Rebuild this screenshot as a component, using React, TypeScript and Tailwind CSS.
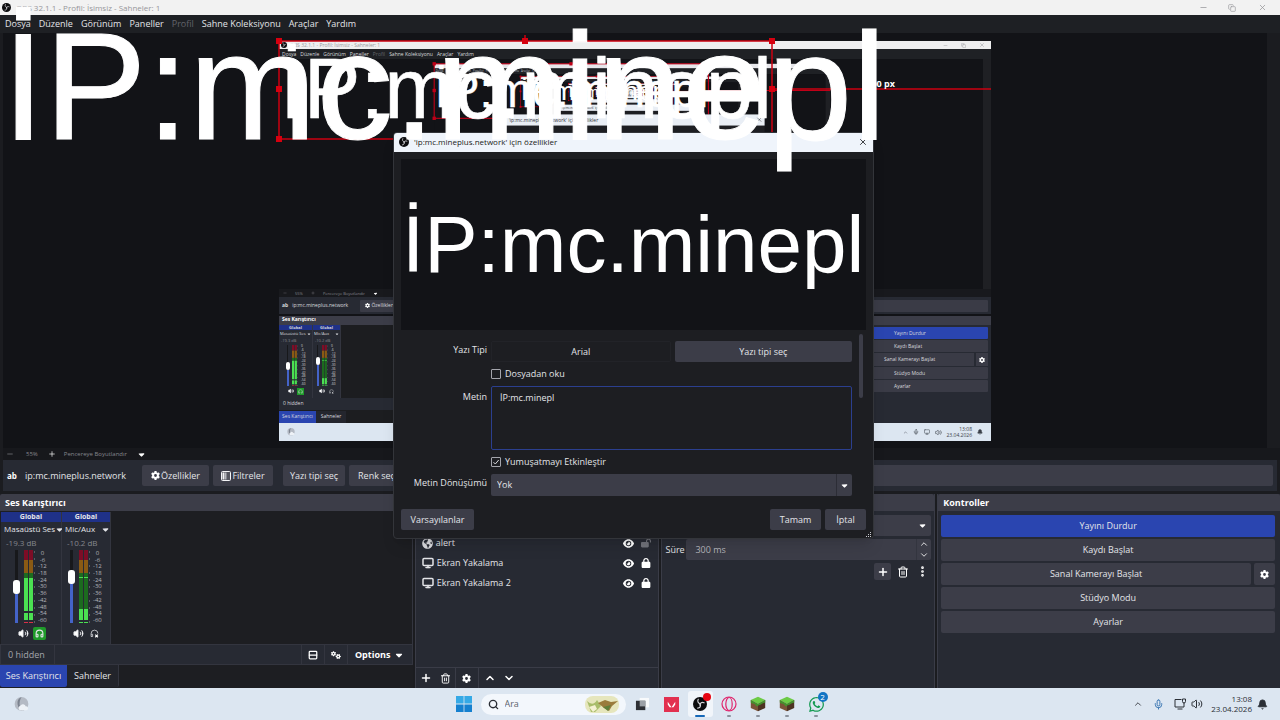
import { useState } from "react"
import type { ReactNode } from "react"
import clsx from "clsx"
import {
  FaCaretDown,
  FaEye,
  FaGear,
  FaGears,
  FaLock,
  FaLockOpen,
  FaWhatsapp,
} from "react-icons/fa6"
import { FaGlobeAmericas } from "react-icons/fa"
import {
  Bell,
  ChevronDown,
  ChevronUp,
  Copy,
  EllipsisVertical,
  Headphones,
  Mic,
  Minus,
  Monitor,
  Plus,
  Rows2,
  Search,
  Trash2,
  Volume2,
  X,
} from "lucide-react"

const OVERLAY_TEXT = "İP:mc.minepl"
const SOURCE_NAME = "ip:mc.mineplus.network"
const DIALOG_TITLE = `'${SOURCE_NAME}' için özellikler`
const MENUS = ["Dosya", "Düzenle", "Görünüm", "Paneller", "Profil", "Sahne Koleksiyonu", "Araçlar", "Yardım"]
const DB_SCALE = ["0", "-6", "-12", "-18", "-24", "-30", "-36", "-42", "-48", "-54", "-60"]

// the screen is captured into its own preview at this ratio
const RATIO = 712 / 1280
const MAX_ECHO = 7

interface Band {
  from: number
  to: number
  color: string
}

interface Channel {
  name: string
  db: string
  level: number
  monitoring: boolean
  bands: Band[]
}

const CHANNELS: Channel[] = [
  {
    name: "Masaüstü Ses",
    db: "-19.3 dB",
    level: 50,
    monitoring: true,
    bands: [
      { from: 0, to: 10, color: "#7d0d26" },
      { from: 10, to: 23, color: "#8a5a14" },
      { from: 23, to: 28, color: "#1c6b1f" },
      { from: 28, to: 61, color: "#4be052" },
      { from: 63, to: 70, color: "#4be052" },
      { from: 72, to: 73, color: "#d83048" },
    ],
  },
  {
    name: "Mic/Aux",
    db: "-10.2 dB",
    level: 66,
    monitoring: false,
    bands: [
      { from: 0, to: 10, color: "#7d0d26" },
      { from: 10, to: 23, color: "#8a5a14" },
      { from: 23, to: 59, color: "#1c6b1f" },
      { from: 27, to: 28, color: "#4be052" },
      { from: 59, to: 70, color: "#4be052" },
      { from: 72, to: 73, color: "#4be052" },
    ],
  },
]

function ObsLogo({ className }: { className?: string }) {
  return (
    <svg viewBox="0 0 24 24" className={className} aria-hidden="true">
      <circle cx="12" cy="12" r="12" fill="#0c0c0e" />
      <g fill="none" stroke="#d6d6da" strokeWidth="2" strokeLinecap="round">
        <path d="M9 4c-2 4 0 7 4 8" />
        <path d="M19 10c-4-2-7 0-7 4" />
        <path d="M8 19c4 0 6-3 4-7" />
      </g>
    </svg>
  )
}

function FilterIcon() {
  return (
    <svg viewBox="0 0 20 20" className="size-[10px]" aria-hidden="true">
      <rect x="1" y="1" width="18" height="18" rx="2" fill="#55565f" stroke="#f4f4f6" strokeWidth="2" />
      <path d="M3 3h4v14H3z" fill="#f4f4f6" />
      <path d="M8 3h3v14H8z" fill="#b5b6bd" />
    </svg>
  )
}

function MutedHeadphones({ className }: { className?: string }) {
  return (
    <svg viewBox="0 0 24 24" className={className} fill="none" stroke="currentColor" strokeWidth="2" aria-hidden="true">
      <path d="M4 20h-1v-8a9 9 0 0 1 18 0" />
      <path d="M3 14h4v6H3" />
      <path d="M14 15l7 7M21 15l-7 7" stroke="#fff" strokeWidth="3" />
    </svg>
  )
}

function Meter({ bands, className }: { bands: Band[]; className: string }) {
  return (
    <svg viewBox="0 0 11 73" preserveAspectRatio="none" className={className} aria-hidden="true">
      {bands.map((b, i) => (
        <g key={i} fill={b.color}>
          <rect x="0" y={b.from} width="4" height={b.to - b.from} />
          <rect x="5" y={b.from} width="4" height={b.to - b.from} />
        </g>
      ))}
      {DB_SCALE.map((_, i) => (
        <path key={i} d={`M10 ${2 + i * 7}h1`} stroke="#8b8c94" />
      ))}
    </svg>
  )
}

// Draws the feedback loop: every level holds a smaller copy of the screen
function Echo({ level, x, y }: { level: number; x: number; y: number }) {
  if (level > MAX_ECHO) return null
  const s = Math.pow(RATIO, level)
  const px = (v: number) => x + v * s
  const py = (v: number) => y + v * s

  return (
    <g>
      {level > 1 && (
        <>
          <rect x={x} y={y} width={1280 * s} height={720 * s} fill="#121317" />
          <rect x={x} y={y} width={1280 * s} height={15 * s} fill="#e6e6ea" />
          <rect x={x} y={py(15)} width={1280 * s} height={18 * s} fill="#1f2125" />
          <rect x={px(1265)} y={py(33)} width={15 * s} height={420 * s} fill="#1f2024" />
        </>
      )}
      {level === 2 && (
        <text x={px(5)} y={py(27)} fontSize={9 * s} fill="#b9bac0" xmlSpace="preserve">
          {MENUS.join("   ")}
        </text>
      )}
      <Echo level={level + 1} x={px(279)} y={py(41)} />
      <rect x={px(279)} y={py(41)} width={493 * s} height={98 * s} fill="none" stroke="#c00018" strokeWidth={2 * s} />
      {[279, 525, 772].map((hx) => (
        <rect key={hx} x={px(hx - 3)} y={py(38)} width={6 * s} height={6 * s} fill="#c00018" />
      ))}
      <rect x={px(276)} y={py(86)} width={6 * s} height={6 * s} fill="#c00018" />
      <rect x={px(276)} y={py(136)} width={6 * s} height={6 * s} fill="#c00018" />
      <path d={`M${px(772)} ${py(89)}H${px(991)}`} stroke="#c00018" strokeWidth={2 * s} />
      <rect x={px(393)} y={py(132)} width={480 * s} height={407 * s} fill="#1d1e22" />
      <rect x={px(393)} y={py(132)} width={480 * s} height={20 * s} fill="#e9eef5" />
      {level < 3 && (
        <>
          <text x={px(413)} y={py(146)} fontSize={9 * s} fill="#33343a">
            {DIALOG_TITLE}
          </text>
          <path
            d={`M${px(860)} ${py(138)}L${px(867)} ${py(145)}M${px(867)} ${py(138)}L${px(860)} ${py(145)}`}
            stroke="#33343a"
            strokeWidth={s}
          />
        </>
      )}
      <text
        x={px(2)}
        y={py(139)}
        fontSize={153 * s}
        fill="#fff"
        stroke="#fff"
        strokeWidth={s}
        fontFamily="Liberation Sans, Arial, sans-serif"
      >
        {OVERLAY_TEXT}
      </text>
    </g>
  )
}

function Guides() {
  const handles = [
    [0, 0],
    [246, 0],
    [493, 0],
    [0, 48],
    [493, 48],
    [0, 98],
    [246, 98],
    [493, 98],
  ]
  return (
    <g>
      <rect x="0" y="0" width="493" height="98" fill="none" stroke="#cc0011" strokeWidth="1.5" />
      <path d="M246 0v-6M493 48h219" stroke="#cc0011" strokeWidth="1.5" />
      {handles.map(([hx, hy]) => (
        <rect key={`${hx}-${hy}`} x={hx - 3} y={hy - 3} width="6" height="6" fill="#d6000f" />
      ))}
      <text x="616" y="46" textAnchor="end" fontSize="9" fontWeight="700" fill="#fff">
        00 px
      </text>
    </g>
  )
}

function MiniButton({ children, active }: { children: ReactNode; active?: boolean }) {
  return (
    <div
      className={clsx(
        "flex h-[12px] w-full items-center rounded-[1px] pl-[92px]",
        active ? "bg-[#2a45b0]" : "bg-[#3a3b46]"
      )}
    >
      {children}
    </div>
  )
}

function ScreenCapture() {
  return (
    <div className="relative flex h-[400px] w-[712px] flex-col bg-[#121317] text-[5px] leading-[7px] text-[#d9dade]">
      <div className="flex h-[8px] items-center gap-[3px] bg-[#eeeeef] px-[2px] text-[#9a9a9e]">
        <ObsLogo className="size-[6px]" />
        <span className="grow">OBS 32.1.1 - Profil: İsimsiz - Sahneler: 1</span>
        <Minus className="mr-[10px] size-[5px]" />
        <Copy className="mr-[10px] size-[5px]" />
        <X className="mr-[4px] size-[6px]" />
      </div>
      <div className="flex h-[10px] items-center gap-[4px] bg-[#1f2125] px-[3px]">
        {MENUS.map((m) => (
          <span key={m} className={m === "Profil" ? "text-[#63646b]" : undefined}>
            {m}
          </span>
        ))}
      </div>
      <div className="grow border-r-8 border-[#1f2024]" />
      <div className="flex h-[8px] items-center gap-[8px] bg-[#18191d] px-[4px] text-[4px] text-[#85868c]">
        <Minus className="size-[4px]" />
        <span>55%</span>
        <Plus className="size-[4px]" />
        <span>Pencereye Boyutlandır</span>
        <FaCaretDown className="size-[5px] text-white" />
      </div>
      <div className="flex h-[17px] items-center gap-[4px] bg-[#272a33] px-[3px]">
        <span className="font-bold">ab</span>
        <span className="w-[64px]">{SOURCE_NAME}</span>
        <div className="flex h-[12px] w-[38px] items-center justify-center gap-[1px] rounded-[1px] bg-[#3a3b46]">
          <FaGear className="size-[5px] text-white" />
          Özellikler
        </div>
        <div className="h-[12px] grow rounded-[1px] bg-[#3a3b46]" />
      </div>
      <div className="flex h-[109px] gap-px pt-[2px]">
        <div className="flex w-[229px] flex-col">
          <div className="h-[9px] bg-[#3c3d48] px-[3px] font-bold text-white">Ses Karıştırıcı</div>
          <div className="flex grow bg-[#1c1d20]">
            {CHANNELS.map((c) => (
              <div
                key={c.name}
                className={clsx(
                  "flex flex-col border-r border-[#33353f] bg-[#272a33] text-[4px] leading-[6px]",
                  c.monitoring ? "w-[34px]" : "w-[28px]"
                )}
              >
                <div className="h-[5px] bg-[#1f3188] text-center font-bold">Global</div>
                <div className="flex h-[8px] items-center justify-between px-px whitespace-nowrap">
                  <span>{c.name}</span>
                  <FaCaretDown className="size-[4px] shrink-0" />
                </div>
                <div className="h-[7px] px-[2px] text-[#85868c]">{c.db}</div>
                <div className={clsx("flex gap-[3px]", c.monitoring ? "pl-[7px]" : "pl-[3px]")}>
                  <div className="flex h-[41px] w-[3px] flex-col items-center">
                    <span className={clsx("w-px bg-[#17181b]", c.monitoring ? "h-[17px]" : "h-[12px]")} />
                    <span className="h-[8px] w-[4px] shrink-0 rounded-full bg-white" />
                    <span className="w-[2px] grow bg-[#4463c8]" />
                  </div>
                  <Meter bands={c.bands} className="h-[41px] w-[6px]" />
                  <div className="flex h-[41px] flex-col justify-between text-[3px] leading-[3px]">
                    {DB_SCALE.map((d) => (
                      <span key={d}>{d}</span>
                    ))}
                  </div>
                </div>
                <div className="flex h-[10px] items-center justify-center gap-[3px]">
                  <Volume2 className="size-[6px] fill-white" />
                  <span className={clsx("p-px", c.monitoring && "bg-[#1f9a2a]")}>
                    {c.monitoring ? <Headphones className="size-[5px]" /> : <MutedHeadphones className="size-[5px]" />}
                  </span>
                </div>
              </div>
            ))}
          </div>
          <div className="h-[12px] bg-[#272a33] px-[4px] pt-[2px]">0 hidden</div>
          <div className="flex h-[13px] items-center bg-[#1c1d20]">
            <span className="h-[12px] w-[37px] bg-[#2a45b0] pt-[2px] text-center">Ses Karıştırıcı</span>
            <span className="h-[12px] w-[30px] bg-[#24262e] pt-[2px] text-center">Sahneler</span>
          </div>
        </div>
        <div className="grow bg-[#272a33]" />
        <div className="flex w-[191px] flex-col gap-[2px] bg-[#272a33]">
          <div className="h-[9px] bg-[#3c3d48]" />
          <div className="flex flex-col gap-px pr-[3px] pl-[2px]">
            <MiniButton active>Yayını Durdur</MiniButton>
            <MiniButton>Kaydı Başlat</MiniButton>
            <div className="flex gap-[2px]">
              <div className="flex h-[13px] flex-1 items-center bg-[#3a3b46] pl-[82px]">Sanal Kamerayı Başlat</div>
              <div className="flex h-[13px] w-[12px] items-center justify-center bg-[#3a3b46]">
                <FaGear className="size-[6px] text-white" />
              </div>
            </div>
            <MiniButton>Stüdyo Modu</MiniButton>
            <MiniButton>Ayarlar</MiniButton>
          </div>
        </div>
      </div>
      <div className="flex h-[18px] items-center justify-between bg-[#dce6f1] px-[8px] text-[#3b4048]">
        <WeatherIcon className="size-[8px]" />
        <div className="flex items-center gap-[5px]">
          <ChevronUp className="size-[5px]" />
          <Mic className="size-[6px]" />
          <Monitor className="size-[6px]" />
          <Volume2 className="size-[7px]" />
          <div className="flex flex-col text-right leading-[6px]">
            <span>13:08</span>
            <span>23.04.2026</span>
          </div>
          <Bell className="size-[6px] fill-current" />
        </div>
      </div>
      <svg
        viewBox="0 0 712 400"
        className="absolute inset-0 size-full overflow-visible"
        role="img"
        aria-label="Ekran Yakalama"
      >
        <Echo level={1} x={0} y={0} />
        <Guides />
      </svg>
    </div>
  )
}

function WeatherIcon({ className }: { className?: string }) {
  return (
    <svg viewBox="0 0 24 24" className={className} aria-hidden="true">
      <circle cx="12" cy="11" r="11" fill="#b4bac4" />
      <path d="M12 0a11 11 0 0 0 4 21c-8-3-9-12-4-21z" fill="#7c838f" />
      <path d="M9 21a4 4 0 0 1 1-7 5 5 0 0 1 9 1 3 3 0 0 1 1 6z" fill="#eef2f7" />
    </svg>
  )
}

function ToolButton({ children, className }: { children: ReactNode; className?: string }) {
  return (
    <button
      className={clsx(
        "flex h-[21px] shrink-0 items-center justify-center gap-px rounded-[2px] bg-[#3c3d48] whitespace-nowrap hover:bg-[#4a4b57]",
        className
      )}
    >
      {children}
    </button>
  )
}

function DockHeader({ children }: { children?: ReactNode }) {
  return (
    <h2 className="flex h-[17px] shrink-0 items-center rounded-t-[2px] bg-[#3c3d48] px-[5px] font-bold text-white">
      {children}
    </h2>
  )
}

function ChannelStrip({ channel }: { channel: Channel }) {
  const [level, setLevel] = useState(channel.level)
  return (
    <div
      className={clsx(
        "flex flex-col border-r border-[#33353f] bg-[#272a33]",
        channel.monitoring ? "w-[61px]" : "w-[49px]"
      )}
    >
      <div className="h-[10px] bg-[#1f3188] text-center text-[7px] leading-[10px] font-bold">Global</div>
      <button className="flex h-[14px] items-center justify-between pl-[3px] text-[8px] whitespace-nowrap">
        {channel.name}
        <FaCaretDown className="size-[9px] shrink-0" />
      </button>
      <div className="h-[14px] px-[5px] text-[8px] leading-[14px] text-[#85868c]">{channel.db}</div>
      <div className={clsx("flex gap-[3px]", channel.monitoring ? "pl-[11px]" : "pl-[5px]")}>
        <div className="relative flex h-[73px] w-[9px] flex-col items-center">
          <span className="w-[3px] bg-[#17181b]" style={{ height: `${Math.round((100 - level) * 0.6)}px` }} />
          <span className="h-[14px] w-[7px] shrink-0 rounded-[3px] bg-white" />
          <span className="w-[3px] grow bg-[#4463c8]" />
          <input
            type="range"
            aria-label={channel.name}
            value={level}
            onChange={(e) => setLevel(Number(e.target.value))}
            className="absolute inset-0 size-full opacity-0 [writing-mode:vertical-lr]"
          />
        </div>
        <Meter bands={channel.bands} className="h-[73px] w-[11px]" />
        <div className="flex h-[73px] flex-col justify-between text-center text-[6px] leading-[6px] text-[#b4b5bb]">
          {DB_SCALE.map((d) => (
            <span key={d}>{d}</span>
          ))}
        </div>
      </div>
      <div className={clsx("flex h-[20px] items-center gap-[4px]", channel.monitoring ? "pl-[17px]" : "pl-[11px]")}>
        <button aria-label="Sesi kapat">
          <Volume2 className="size-[11px] fill-white" />
        </button>
        <button aria-label="İzleme" className={clsx("rounded-[2px] p-[2px]", channel.monitoring && "bg-[#1f9a2a]")}>
          {channel.monitoring ? (
            <Headphones className="size-[9px]" strokeWidth={3} />
          ) : (
            <MutedHeadphones className="size-[9px]" />
          )}
        </button>
      </div>
    </div>
  )
}

function MixerDock() {
  return (
    <section className="flex flex-col">
      <DockHeader>Ses Karıştırıcı</DockHeader>
      <div className="flex grow border-r border-[#33353f] bg-[#1d1e22] pt-px pl-px">
        {CHANNELS.map((c) => (
          <ChannelStrip key={c.name} channel={c} />
        ))}
      </div>
      <div className="flex h-[21px] items-stretch border border-[#33353f] bg-[#272a33] text-[#a4a5ac]">
        <button className="w-[54px] border-r border-[#33353f] px-[7px] text-left whitespace-nowrap">0 hidden</button>
        <div className="grow border-r border-[#33353f]" />
        <button aria-label="Düzen" className="flex w-[23px] items-center justify-center border-r border-[#33353f] text-white">
          <Rows2 className="size-[10px]" strokeWidth={3} />
        </button>
        <button aria-label="Gelişmiş" className="flex w-[23px] items-center justify-center border-r border-[#33353f] text-white">
          <FaGears className="size-[10px]" />
        </button>
        <button className="flex w-[64px] items-center justify-center gap-[4px] font-bold text-white">
          Options
          <FaCaretDown className="size-[10px]" />
        </button>
      </div>
      <div className="flex h-[23px] bg-[#1d1e22]">
        <button className="h-[22px] w-[67px] rounded-b-[2px] bg-[#2a45b0]">Ses Karıştırıcı</button>
        <button className="h-[22px] w-[52px] rounded-b-[2px] border-r border-[#33353f] bg-[#22242b]">Sahneler</button>
      </div>
    </section>
  )
}

function SourcesDock() {
  const sources = [
    { name: "alert", browser: true, locked: false },
    { name: "Ekran Yakalama", browser: false, locked: true },
    { name: "Ekran Yakalama 2", browser: false, locked: true },
  ]
  return (
    <section className="flex flex-col border-r border-[#3a3c47] bg-[#272a33]">
      <DockHeader />
      <ul className="grow border-l border-[#3a3c47] pt-[22px]">
        {sources.map((s) => (
          <li key={s.name} className="flex h-[20px] items-center pr-[7px] pl-[6px]">
            {s.browser ? (
              <FaGlobeAmericas className="size-[11px] text-[#d9dade]" />
            ) : (
              <Monitor className="size-[12px]" strokeWidth={3} />
            )}
            <span className="grow pl-[3px]">{s.name}</span>
            <button aria-label="Görünürlük" className="mr-[7px]">
              <FaEye className="size-[11px] text-white" />
            </button>
            <button aria-label="Kilit">
              {s.locked ? <FaLock className="size-[10px] text-white" /> : <FaLockOpen className="size-[10px] text-[#70727a]" />}
            </button>
          </li>
        ))}
      </ul>
      <div className="flex h-[21px] items-stretch border-t border-l border-[#3a3c47] text-white">
        <button aria-label="Ekle" className="flex w-[20px] items-center justify-center">
          <Plus className="size-[12px]" strokeWidth={3} />
        </button>
        <button aria-label="Sil" className="flex w-[20px] items-center justify-center border-r border-[#3a3c47]">
          <Trash2 className="size-[11px]" strokeWidth={2} />
        </button>
        <button aria-label="Özellikler" className="flex w-[23px] items-center justify-center border-r border-[#3a3c47]">
          <FaGear className="size-[9px]" />
        </button>
        <button aria-label="Yukarı" className="flex w-[23px] items-center justify-center">
          <ChevronUp className="size-[12px]" strokeWidth={3} />
        </button>
        <button aria-label="Aşağı" className="flex w-[14px] items-center justify-center">
          <ChevronDown className="size-[12px]" strokeWidth={3} />
        </button>
      </div>
    </section>
  )
}

function TransitionsDock() {
  return (
    <section className="flex flex-col border-r border-l border-[#3a3c47] bg-[#272a33]">
      <DockHeader />
      <div className="flex flex-col gap-[3px] px-[3px] pt-[4px]">
        <button
          aria-label="Geçiş"
          className="flex h-[21px] items-center justify-end rounded-[2px] bg-[#3c3d48] pr-[4px] text-white"
        >
          <FaCaretDown className="size-[9px]" />
        </button>
        <div className="flex h-[21px] items-center gap-[3px]">
          <label htmlFor="duration" className="w-[18px]">
            Süre
          </label>
          <div className="flex h-full min-w-0 grow rounded-[2px] bg-[#3c3d48]">
            <input
              id="duration"
              defaultValue="300 ms"
              className="min-w-0 grow bg-transparent px-[9px] text-[#b4b5bb] outline-none"
            />
            <div className="flex w-[15px] flex-col items-center justify-between border-l border-[#33353f]">
              <ChevronUp className="size-[10px] text-white" />
              <ChevronDown className="size-[10px] text-white" />
            </div>
          </div>
        </div>
        <div className="flex justify-end gap-[3px] text-white">
          <button aria-label="Geçiş ekle" className="flex size-[17px] items-center justify-center rounded-[2px] bg-[#3c3d48]">
            <Plus className="size-[12px]" strokeWidth={3} />
          </button>
          <button aria-label="Geçişi sil" className="flex size-[17px] items-center justify-center">
            <Trash2 className="size-[12px]" />
          </button>
          <button aria-label="Diğer" className="flex size-[17px] items-center justify-center">
            <EllipsisVertical className="size-[13px]" strokeWidth={3} />
          </button>
        </div>
      </div>
    </section>
  )
}

function ControlButton({ children, active }: { children: ReactNode; active?: boolean }) {
  return (
    <button className={clsx("h-[22px] grow rounded-[2px]", active ? "bg-[#2a45b0]" : "bg-[#3c3d48]")}>{children}</button>
  )
}

function ControlsDock() {
  return (
    <section className="flex flex-col border-l border-[#3a3c47] bg-[#272a33]">
      <DockHeader>Kontroller</DockHeader>
      <div className="flex flex-col gap-[2px] py-[4px] pr-[5px] pl-[3px]">
        <ControlButton active>Yayını Durdur</ControlButton>
        <ControlButton>Kaydı Başlat</ControlButton>
        <div className="flex gap-[3px]">
          <ControlButton>Sanal Kamerayı Başlat</ControlButton>
          <button aria-label="Sanal kamera ayarları" className="flex w-[21px] items-center justify-center rounded-[2px] bg-[#3c3d48]">
            <FaGear className="size-[9px] text-white" />
          </button>
        </div>
        <ControlButton>Stüdyo Modu</ControlButton>
        <ControlButton>Ayarlar</ControlButton>
      </div>
    </section>
  )
}

function CheckField({ id, label, checked }: { id: string; label: string; checked?: boolean }) {
  return (
    <div className="col-start-2 flex items-center gap-[4px]">
      <span className="relative flex size-[10px]">
        <input
          id={id}
          type="checkbox"
          defaultChecked={checked}
          className="peer size-[10px] appearance-none rounded-[1px] border border-[#a4a5ac]"
        />
        <svg
          viewBox="0 0 10 10"
          className="pointer-events-none absolute inset-0 hidden size-full peer-checked:block"
          fill="none"
          stroke="#d9dade"
        >
          <path d="M2.5 5.2l1.8 1.8 3.400-4" />
        </svg>
      </span>
      <label htmlFor={id}>{label}</label>
    </div>
  )
}

function PropertiesDialog() {
  return (
    <div
      role="dialog"
      aria-label={DIALOG_TITLE}
      className="absolute top-[132px] left-[393px] flex w-[481px] flex-col rounded-[4px] border border-[#33353a] bg-[#1d1e22] shadow-lg"
    >
      <div className="flex h-[19px] items-center gap-[5px] rounded-t-[3px] bg-[#eff4fb] px-[5px] pb-[2px] text-[8px] text-[#1b1c20]">
        <ObsLogo className="size-[10px]" />
        <span className="grow">{DIALOG_TITLE}</span>
        <button aria-label="Kapat">
          <X className="size-[10px]" />
        </button>
      </div>
      <div className="mx-[7px] mt-[7px] flex h-[171px] items-center bg-[#121317] px-px">
        <span className="font-['Liberation_Sans',Arial,sans-serif] text-[80px] leading-[80px] whitespace-nowrap text-white">
          {OVERLAY_TEXT}
        </span>
      </div>
      <div className="flex gap-[7px] pt-[4px] pr-[10px] pl-[7px]">
        <div className="grid grow grid-cols-[86px_1fr] gap-x-[4px] gap-y-[6px] pt-[7px]">
          <span className="pt-[3px] text-right">Yazı Tipi</span>
          <div className="flex h-[21px] gap-[4px]">
            <span className="flex flex-1 items-center justify-center rounded-[2px] border border-[#222328]">Arial</span>
            <ToolButton className="flex-1">Yazı tipi seç</ToolButton>
          </div>
          <CheckField id="from-file" label="Dosyadan oku" />
          <label htmlFor="text" className="col-start-1 pt-[5px] text-right">
            Metin
          </label>
          <textarea
            id="text"
            defaultValue={OVERLAY_TEXT}
            className="h-[64px] resize-none rounded-[2px] border border-[#2b3f8f] bg-transparent px-[8px] py-[5px] outline-none"
          />
          <CheckField id="antialias" label="Yumuşatmayı Etkinleştir" checked />
          <label htmlFor="transform" className="col-start-1 pt-[3px] text-right">
            Metin Dönüşümü
          </label>
          <div className="relative">
            <select id="transform" className="h-[22px] w-full appearance-none rounded-[2px] bg-[#3c3d48] px-[6px]">
              <option>Yok</option>
            </select>
            <span className="pointer-events-none absolute inset-y-0 right-0 flex w-[16px] items-center justify-center border-l border-[#2c2d36]">
              <FaCaretDown className="size-[9px] text-white" />
            </span>
          </div>
        </div>
        <div className="h-[64px] w-[4px] rounded-full bg-[#3c3d48]" />
      </div>
      <div className="flex gap-[4px] px-[7px] pt-[13px] pb-[8px]">
        <ToolButton className="w-[73px]">Varsayılanlar</ToolButton>
        <div className="grow" />
        <ToolButton className="w-[51px]">Tamam</ToolButton>
        <ToolButton className="w-[41px]">İptal</ToolButton>
      </div>
      <svg viewBox="0 0 6 6" className="absolute right-[1px] bottom-[1px] size-[6px]" fill="#c9cad0" aria-hidden="true">
        <path d="M0 5h1v1H0zM2 5h1v1H2zM4 5h1v1H4zM2 3h1v1H2zM4 3h1v1H4zM4 1h1v1H4z" />
      </svg>
    </div>
  )
}

function GrassBlock() {
  return (
    <svg viewBox="0 0 20 20" className="size-[16px]" aria-hidden="true">
      <path d="M10 1l9 4-9 5-9-5z" fill="#6ccb45" />
      <path d="M1 5l9 5v9l-9-4z" fill="#7a5337" />
      <path d="M19 5l-9 5v9l9-4z" fill="#4d3222" />
      <path d="M1 5l9 5v3l-3-1v-1l-3-2v1L1 8zM19 5l-9 5v2l3-1 3-2 3-1z" fill="#43912c" />
    </svg>
  )
}

function TaskItem({ label, children, active, running }: { label: string; children: ReactNode; active?: boolean; running?: boolean }) {
  return (
    <button
      aria-label={label}
      className={clsx("relative flex h-[26px] w-[25px] items-center justify-center rounded-[3px]", active && "bg-[#f1f5fa]")}
    >
      {children}
      {running && (
        <span
          className={clsx(
            "absolute bottom-0 h-[2px] rounded-full",
            active ? "w-[10px] bg-[#1668b8]" : "w-[4px] bg-[#8a919c]"
          )}
        />
      )}
    </button>
  )
}

function Taskbar() {
  return (
    <footer className="flex h-[32px] shrink-0 items-center bg-[#dce6f1] text-[#2a2e35]">
      <div className="flex flex-1 items-center pl-[14px]">
        <WeatherIcon className="size-[15px]" />
      </div>
      <div className="mr-[2px] flex items-center gap-[4px]">
        <TaskItem label="Başlat">
          <svg viewBox="0 0 16 16" className="size-[16px]" aria-hidden="true">
            <path d="M0 0h7.600v7.600H0zM8.400 0H16v7.600H8.400z" fill="#35a9e6" />
            <path d="M0 8.400h7.600V16H0zM8.400 8.400H16V16H8.400z" fill="#1580cf" />
          </svg>
        </TaskItem>
        <div className="flex h-[21px] w-[145px] items-center rounded-full bg-[#f3f7fc] px-[7px]">
          <Search className="size-[11px]" strokeWidth={3} />
          <input aria-label="Ara" placeholder="Ara" className="w-[60px] grow bg-transparent px-[6px] outline-none placeholder:text-[#5d636d]" />
          <svg viewBox="0 0 34 17" className="h-[17px] w-[34px]" aria-hidden="true">
            <rect width="34" height="17" rx="8" fill="#e6e6bd" />
            <path d="M2 5q6 6 10-1l4 6-6 6H6z" fill="#a9bd6b" />
            <path d="M13 7l7-3 6 2 7-1-6 5-3 5-5-3z" fill="#9a7b3c" />
            <path d="M18 11l8-2-3 6z" fill="#5f7f3a" />
            <path d="M4 11l6-2 2 4-4 3z" fill="#f4f1d2" />
          </svg>
        </div>
        <TaskItem label="Görev görünümü">
          <svg viewBox="0 0 16 16" className="size-[15px]" aria-hidden="true">
            <path d="M5 1h10v10H5z" fill="#f8fafc" />
            <path d="M1 4h10v10H1z" fill="#2e3035" />
            <path d="M5 4h6v6H5z" fill="#9ba0a6" />
          </svg>
        </TaskItem>
        <TaskItem label="Valorant">
          <svg viewBox="0 0 16 16" className="size-[15px]" aria-hidden="true">
            <path d="M0 0h16v16H0z" fill="#e2304f" />
            <path d="M4 5l4 6H6L4 8zM12 5v3l-2 3H8z" fill="#fff" />
          </svg>
        </TaskItem>
        <TaskItem label="OBS Studio" active running>
          <ObsLogo className="size-[14px]" />
          <span className="absolute top-[2px] right-[2px] size-[8px] rounded-full bg-[#e80512]" />
        </TaskItem>
        <TaskItem label="Opera GX" running>
          <svg viewBox="0 0 16 16" className="size-[16px]" fill="none" stroke="#e0246c" aria-hidden="true">
            <circle cx="8" cy="8" r="7" strokeWidth="1.2" />
            <ellipse cx="8" cy="8" rx="3.2" ry="6.5" strokeWidth="1.2" />
          </svg>
        </TaskItem>
        <TaskItem label="Minecraft" running>
          <GrassBlock />
        </TaskItem>
        <TaskItem label="Minecraft 2" running>
          <GrassBlock />
        </TaskItem>
        <TaskItem label="WhatsApp" running>
          <FaWhatsapp className="size-[17px] text-[#159a52]" />
          <span className="absolute top-px right-px size-[10px] rounded-full bg-[#1274c4] text-center text-[8px] leading-[10px] text-white">
            2
          </span>
        </TaskItem>
      </div>
      <div className="flex flex-1 items-center justify-end pr-[12px]">
        <ChevronUp className="mr-[10px] size-[10px]" />
        <Mic className="mr-[10px] size-[11px] text-[#2f6fae]" />
        <svg viewBox="0 0 24 24" className="mr-[5px] size-[12px]" fill="none" stroke="currentColor" strokeWidth="2" aria-hidden="true">
          <path d="M15 3H2v15h18v-6M7 22h10M20 12V9" />
          <path d="M17 2h6v5a3 3 0 0 1-6 0z" />
        </svg>
        <Volume2 className="mr-[8px] size-[12px]" />
        <div className="flex flex-col text-right text-[8px] leading-[10px]">
          <span>13:08</span>
          <span>23.04.2026</span>
        </div>
        <Bell className="ml-[5px] size-[11px] fill-current" />
      </div>
    </footer>
  )
}

export default function App() {
  return (
    <div className="relative flex min-h-screen flex-col overflow-hidden bg-[#1b1c20] font-['Open_Sans','Noto_Sans',sans-serif] text-[9px] leading-[12px] text-[#e3e4e8]">
      <header className="flex h-[15px] shrink-0 items-center bg-[#f2f2f2] px-[2px] text-[8px] text-[#97979b]">
        <ObsLogo className="mr-[5px] size-[9px]" />
        <span className="grow">OBS 32.1.1 - Profil: İsimsiz - Sahneler: 1</span>
        <Minus className="mr-[20px] size-[9px]" />
        <Copy className="mr-[22px] size-[8px]" />
        <X className="mr-[11px] size-[9px]" />
      </header>

      <nav className="flex h-[18px] shrink-0 items-center gap-[8px] bg-[#1e2024] px-[5px]">
        {MENUS.map((m) => (
          <button key={m} className={m === "Profil" ? "text-[#63646b]" : undefined}>
            {m}
          </button>
        ))}
      </nav>

      {/* Preview canvas */}
      <main className="mr-[13px] ml-[3px] flex grow justify-center bg-[#121317] pt-[8px] pb-[7px]">
        <ScreenCapture />
      </main>

      <div className="ml-[3px] flex h-[12px] shrink-0 items-center bg-[#17181c] px-[3px] text-[6px] text-[#85868c]">
        <button aria-label="Uzaklaştır" className="mr-[12px]">
          <Minus className="size-[8px]" />
        </button>
        <span className="mr-[10px]">55%</span>
        <button aria-label="Yakınlaştır" className="mr-[8px] text-white">
          <Plus className="size-[8px]" />
        </button>
        <button className="flex items-center gap-[10px]">
          Pencereye Boyutlandır
          <FaCaretDown className="size-[9px] text-white" />
        </button>
      </div>

      {/* Source toolbar */}
      <div className="mx-[3px] mb-[3px] flex h-[31px] shrink-0 items-center gap-[4px] bg-[#272a33] px-[4px]">
        <span className="w-[14px] text-[8px] font-bold text-white">ab</span>
        <span className="w-[113px]">{SOURCE_NAME}</span>
        <ToolButton className="w-[67px]">
          <FaGear className="size-[9px] text-white" />
          Özellikler
        </ToolButton>
        <ToolButton className="mr-[6px] w-[60px]">
          <FilterIcon />
          Filtreler
        </ToolButton>
        <ToolButton className="w-[62px]">Yazı tipi seç</ToolButton>
        <ToolButton className="w-[55px]">Renk seç</ToolButton>
        <input aria-label="Metin" className="h-[21px] min-w-0 grow rounded-[2px] bg-[#3c3d48] px-[6px] outline-none" />
      </div>

      <div className="grid h-[194px] shrink-0 grid-cols-[413fr_245fr_274fr_343fr] gap-[2px]">
        <MixerDock />
        <SourcesDock />
        <TransitionsDock />
        <ControlsDock />
      </div>

      <Taskbar />

      <PropertiesDialog />

      <div className="pointer-events-none absolute top-0 left-[2px] font-['Liberation_Sans',Arial,sans-serif] text-[153px] leading-[172px] whitespace-nowrap text-white [-webkit-text-stroke:1px_white]">
        {OVERLAY_TEXT}
      </div>
    </div>
  )
}
